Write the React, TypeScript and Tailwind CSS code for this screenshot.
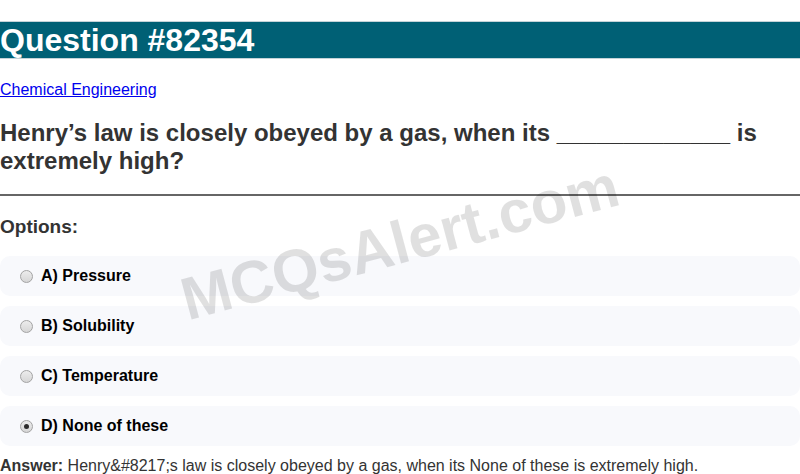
export default function App() {
  const options = [
    { key: "A", text: "Pressure", checked: false },
    { key: "B", text: "Solubility", checked: false },
    { key: "C", text: "Temperature", checked: false },
    { key: "D", text: "None of these", checked: true },
  ];

  return (
    <div className="relative w-[800px] h-[474px] overflow-hidden bg-white font-['Liberation_Sans',Arial,sans-serif]">
      <h1 className="mt-[21px] h-[38px] border-y border-[#c5d3d8] bg-[#006075] text-white font-bold text-[32px] leading-[36px]">
        Question #82354
      </h1>

      <div className="mt-[22px] text-[16px] leading-[18px]">
        <a href="#" className="text-[#0000ee] underline">Chemical Engineering</a>
      </div>

      <h2 className="mt-[20px] text-[24px] leading-[28px] font-bold text-[#333]">
        Henry’s law is closely obeyed by a gas, when its _____________ is extremely high?
      </h2>

      <hr className="mt-[19px] border-0 h-[2px] bg-[#666]" />

      <h3 className="mt-[20px] text-[19px] leading-[22px] font-bold text-[#333]">Options:</h3>

      <div className="mt-[18px] flex flex-col gap-[10px]">
        {options.map((o) => (
          <div key={o.key} className="h-[40px] rounded-[10px] bg-[#f8f9fc] flex items-center pl-[20px] gap-[8px]">
            <span className="w-[13px] h-[13px] rounded-full border border-[#a3a3a3] bg-gradient-to-b from-[#ececec] to-[#d6d6d6] flex items-center justify-center">
              {o.checked && <span className="w-[5px] h-[5px] rounded-full bg-[#2b2b2b]" />}
            </span>
            <span className="text-[16px] font-bold text-black">
              {o.key}) {o.text}
            </span>
          </div>
        ))}
      </div>

      <p className="mt-[11px] text-[16px] leading-[18px] text-[#333]">
        <b>Answer:</b> Henry&amp;#8217;s law is closely obeyed by a gas, when its None of these is extremely high.
      </p>

      <div className="pointer-events-none absolute left-[400px] top-[243px] -translate-x-1/2 -translate-y-1/2 -rotate-[15deg] whitespace-nowrap text-[60px] font-bold text-black/[0.12]">
        MCQsAlert.com
      </div>
    </div>
  );
}
